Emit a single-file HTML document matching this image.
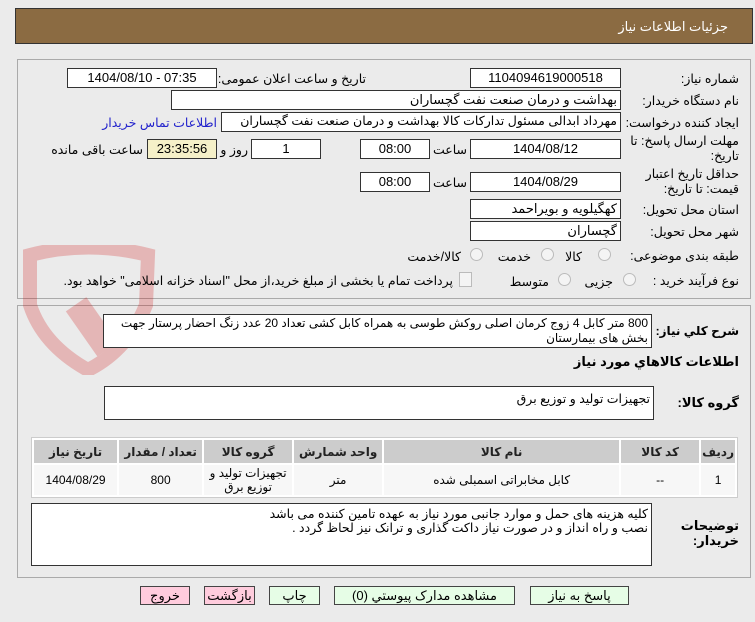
<!DOCTYPE html>
<html><head><meta charset="utf-8"><style>
body{margin:0;width:755px;height:622px;background:#ebebeb;position:relative;overflow:hidden;font-family:"Liberation Sans","DejaVu Sans",sans-serif;font-size:12px;color:#000}
.a{position:absolute}
.box{position:absolute;background:#fff;border:1px solid #333;box-sizing:border-box;text-align:center;line-height:17px;font-size:13px}
.l{position:absolute;font-size:12.5px;direction:rtl;white-space:nowrap}
.r{text-align:right;padding-right:3px;direction:rtl}
.rad{position:absolute;width:11px;height:11px;border:1px solid #bbb;border-radius:50%;background:#f4f4f4}
.btn{position:absolute;top:586px;height:19px;border:1px solid #444;box-sizing:border-box;text-align:center;font-size:13px;line-height:17px;direction:rtl}
table{border-collapse:separate;border-spacing:2px;position:absolute;left:31px;top:437px;width:707px;background:#fff;border:1px solid #ccc}
td{font-size:12px;text-align:center;direction:rtl;background:#f7f7f7;line-height:14px}
th{background:#ccc;height:21px;font-size:12px;white-space:nowrap;color:#222}
</style></head><body>
<div class="a" style="left:15px;top:8px;width:738px;height:36px;background:#8b6b42;border:1px solid #333;box-sizing:border-box"></div>
<div class="l" style="right:27px;top:19px;color:#fff;font-size:13px">جزئیات اطلاعات نیاز</div>
<div class="a" style="left:17px;top:59px;width:734px;height:240px;border:1px solid #aaa;box-sizing:border-box"></div>
<div class="a" style="left:17px;top:305px;width:734px;height:273px;border:1px solid #aaa;box-sizing:border-box"></div>
<svg class="a" style="left:18px;top:245px;opacity:.22" width="140" height="130"><path d="M12 10 Q70 -5 130 10 L128 60 Q110 105 70 125 Q25 100 12 60Z" fill="none" stroke="#c00" stroke-width="14"/><rect x="60" y="55" width="25" height="55" fill="#c00" transform="rotate(-35 72 80)"/></svg>
<div class="l" style="right:16px;top:71px">شماره نیاز:</div>
<div class="box" style="left:470px;top:68px;width:151px;height:20px">1104094619000518</div>
<div class="l" style="right:389px;top:71px">تاریخ و ساعت اعلان عمومی:</div>
<div class="box" style="left:67px;top:68px;width:150px;height:20px">1404/08/10 - 07:35</div>
<div class="l" style="right:16px;top:93px">نام دستگاه خریدار:</div>
<div class="box r" style="left:171px;top:90px;width:450px;height:20px">بهداشت و درمان صنعت نفت گچساران</div>
<div class="l" style="right:16px;top:115px">ایجاد کننده درخواست:</div>
<div class="box r" style="left:221px;top:112px;width:400px;height:20px;font-size:12.5px">مهرداد ابدالی مسئول تدارکات کالا  بهداشت و درمان صنعت نفت گچساران</div>
<div class="l" style="right:538px;top:115px;color:#22c">اطلاعات تماس خریدار</div>
<div class="l" style="right:16px;top:134px;line-height:15px;text-align:right">مهلت ارسال پاسخ: تا<br>تاریخ:</div>
<div class="box" style="left:470px;top:139px;width:151px;height:20px">1404/08/12</div>
<div class="l" style="right:288px;top:142px">ساعت</div>
<div class="box" style="left:360px;top:139px;width:70px;height:20px">08:00</div>
<div class="box" style="left:251px;top:139px;width:70px;height:20px">1</div>
<div class="l" style="right:507px;top:142px">روز و</div>
<div class="box" style="left:147px;top:139px;width:70px;height:20px;background:#f5f0c8">23:35:56</div>
<div class="l" style="right:612px;top:142px">ساعت باقی مانده</div>
<div class="l" style="right:16px;top:167px;line-height:15px;text-align:right">حداقل تاریخ اعتبار<br>قیمت: تا تاریخ:</div>
<div class="box" style="left:470px;top:172px;width:151px;height:20px">1404/08/29</div>
<div class="l" style="right:288px;top:175px">ساعت</div>
<div class="box" style="left:360px;top:172px;width:70px;height:20px">08:00</div>
<div class="l" style="right:16px;top:202px">استان محل تحویل:</div>
<div class="box r" style="left:470px;top:199px;width:151px;height:20px">کهگیلویه و بویراحمد</div>
<div class="l" style="right:16px;top:224px">شهر محل تحویل:</div>
<div class="box r" style="left:470px;top:221px;width:151px;height:20px">گچساران</div>
<div class="l" style="right:16px;top:248px">طبقه بندی موضوعی:</div>
<div class="rad" style="left:598px;top:248px"></div><div class="l" style="right:173px;top:249px">کالا</div>
<div class="rad" style="left:541px;top:248px"></div><div class="l" style="right:224px;top:249px">خدمت</div>
<div class="rad" style="left:470px;top:248px"></div><div class="l" style="right:294px;top:249px">کالا/خدمت</div>
<div class="l" style="right:16px;top:273px">نوع فرآیند خرید :</div>
<div class="rad" style="left:623px;top:273px"></div><div class="l" style="right:142px;top:274px">جزیی</div>
<div class="rad" style="left:558px;top:273px"></div><div class="l" style="right:206px;top:274px">متوسط</div>
<div class="a" style="left:459px;top:272px;width:11px;height:13px;border:1px solid #bbb;background:#f4f4f4"></div>
<div class="l" style="right:302px;top:273px">پرداخت تمام یا بخشی از مبلغ خرید،از محل "اسناد خزانه اسلامی" خواهد بود.</div>
<div class="l" style="right:16px;top:324px;font-weight:bold;font-size:12px">شرح کلي نیاز:</div>
<div class="box r" style="left:103px;top:314px;width:549px;height:34px;line-height:15px;font-size:12px;padding-top:1px">800 متر کابل 4 زوج کرمان اصلی روکش طوسی به همراه  کابل کشی تعداد 20 عدد زنگ احضار پرستار جهت بخش های بیمارستان</div>
<div class="l" style="right:16px;top:354px;font-weight:bold;font-size:13px">اطلاعات کالاهاي مورد نیاز</div>
<div class="l" style="right:16px;top:395px;font-weight:bold;font-size:13px">گروه کالا:</div>
<div class="box r" style="left:104px;top:386px;width:550px;height:34px;line-height:18px;font-size:12.5px;padding-top:3px">تجهیزات تولید و توزیع برق</div>
<table dir="rtl"><tr><th style="width:28px">ردیف</th><th style="width:76px">کد کالا</th><th style="width:233px">نام کالا</th><th style="width:86px">واحد شمارش</th><th style="width:86px">گروه کالا</th><th style="width:81px">تعداد / مقدار</th><th>تاریخ نیاز</th></tr>
<tr style="height:28px"><td>1</td><td>--</td><td>کابل مخابراتی اسمبلی شده</td><td>متر</td><td>تجهیزات تولید و توزیع برق</td><td>800</td><td>1404/08/29</td></tr></table>
<div class="l" style="right:16px;top:518px;font-weight:bold;font-size:13px;line-height:15px;text-align:right">توضیحات<br>خریدار:</div>
<div class="box r" style="left:31px;top:503px;width:621px;height:63px;line-height:14px;font-size:12.5px;padding-top:3px">کلیه هزینه های حمل و موارد جانبی مورد نیاز به عهده تامین کننده می باشد<br>نصب و راه انداز و در صورت نیاز داکت گذاری و ترانک نیز لحاظ گردد .</div>
<div class="btn" style="left:140px;width:50px;background:#fcd">خروج</div>
<div class="btn" style="left:204px;width:51px;background:#fcd">بازگشت</div>
<div class="btn" style="left:269px;width:51px;background:#e6fde6">چاپ</div>
<div class="btn" style="left:334px;width:181px;background:#e6fde6">مشاهده مدارک پیوستي (0)</div>
<div class="btn" style="left:530px;width:99px;background:#e6fde6">پاسخ به نیاز</div>
</body></html>
